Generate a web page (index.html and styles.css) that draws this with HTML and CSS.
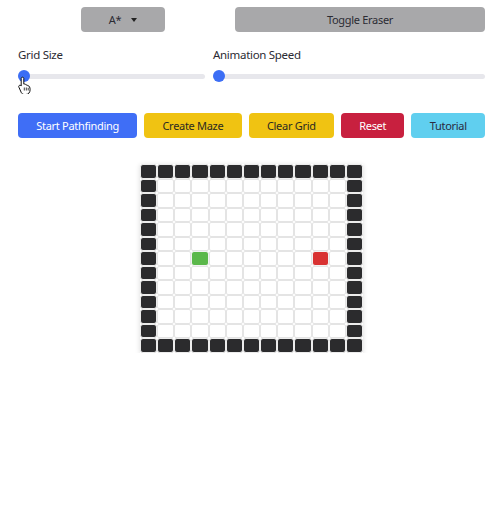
FILE: index.html
```html
<!DOCTYPE html>
<html>
<head>
<meta charset="utf-8">
<link rel="stylesheet" href="styles.css">
</head>
<body>
<div class="app">
  <div class="top">
    <div class="algo"><button class="btn btn-gray dropdown">A*<span class="caret"></span></button></div>
    <div class="eraser"><button class="btn btn-gray eraser-btn">Toggle Eraser</button></div>
  </div>
  <div class="controls">
    <div class="ctrl">
      <div class="label">Grid Size</div>
      <div class="slider"><span class="thumb"></span></div>
    </div>
    <div class="ctrl">
      <div class="label">Animation Speed</div>
      <div class="slider"><span class="thumb"></span></div>
    </div>
    <svg class="pointer" width="14" height="18" viewBox="0 0 14 18">
      <path d="M4.5 1.2c.8 0 1.3.6 1.3 1.3v5.6l.5-.1c.7-.2 1.4.1 1.6.7l.2.4c.6-.3 1.4-.1 1.7.6l.1.3c.6-.2 1.3 0 1.6.6.4.8.6 2 .6 3.2 0 2.6-1.7 4.7-4.3 4.7H6.4c-1.3 0-2.4-.7-3-1.7L.9 11.2c-.4-.7-.2-1.5.5-1.8.6-.3 1.3-.1 1.7.4l.1.2V2.5c0-.7.6-1.3 1.3-1.3z" fill="#fff" stroke="#111" stroke-width="1"/>
      <path d="M6.3 11.5v3M8.3 11.5v3M10.2 11.8v2.7" stroke="#111" stroke-width=".8" fill="none"/>
    </svg>
  </div>
  <div class="actions">
    <button class="btn btn-blue">Start Pathfinding</button>
    <button class="btn btn-yellow">Create Maze</button>
    <button class="btn btn-yellow">Clear Grid</button>
    <button class="btn btn-red">Reset</button>
    <button class="btn btn-cyan">Tutorial</button>
  </div>
  <div class="board">
    <span class="cell wall"></span><span class="cell wall"></span><span class="cell wall"></span><span class="cell wall"></span><span class="cell wall"></span><span class="cell wall"></span><span class="cell wall"></span><span class="cell wall"></span><span class="cell wall"></span><span class="cell wall"></span><span class="cell wall"></span><span class="cell wall"></span><span class="cell wall"></span>
    <span class="cell wall"></span><span class="cell"></span><span class="cell"></span><span class="cell"></span><span class="cell"></span><span class="cell"></span><span class="cell"></span><span class="cell"></span><span class="cell"></span><span class="cell"></span><span class="cell"></span><span class="cell"></span><span class="cell wall"></span>
    <span class="cell wall"></span><span class="cell"></span><span class="cell"></span><span class="cell"></span><span class="cell"></span><span class="cell"></span><span class="cell"></span><span class="cell"></span><span class="cell"></span><span class="cell"></span><span class="cell"></span><span class="cell"></span><span class="cell wall"></span>
    <span class="cell wall"></span><span class="cell"></span><span class="cell"></span><span class="cell"></span><span class="cell"></span><span class="cell"></span><span class="cell"></span><span class="cell"></span><span class="cell"></span><span class="cell"></span><span class="cell"></span><span class="cell"></span><span class="cell wall"></span>
    <span class="cell wall"></span><span class="cell"></span><span class="cell"></span><span class="cell"></span><span class="cell"></span><span class="cell"></span><span class="cell"></span><span class="cell"></span><span class="cell"></span><span class="cell"></span><span class="cell"></span><span class="cell"></span><span class="cell wall"></span>
    <span class="cell wall"></span><span class="cell"></span><span class="cell"></span><span class="cell"></span><span class="cell"></span><span class="cell"></span><span class="cell"></span><span class="cell"></span><span class="cell"></span><span class="cell"></span><span class="cell"></span><span class="cell"></span><span class="cell wall"></span>
    <span class="cell wall"></span><span class="cell"></span><span class="cell"></span><span class="cell start"></span><span class="cell"></span><span class="cell"></span><span class="cell"></span><span class="cell"></span><span class="cell"></span><span class="cell"></span><span class="cell end"></span><span class="cell"></span><span class="cell wall"></span>
    <span class="cell wall"></span><span class="cell"></span><span class="cell"></span><span class="cell"></span><span class="cell"></span><span class="cell"></span><span class="cell"></span><span class="cell"></span><span class="cell"></span><span class="cell"></span><span class="cell"></span><span class="cell"></span><span class="cell wall"></span>
    <span class="cell wall"></span><span class="cell"></span><span class="cell"></span><span class="cell"></span><span class="cell"></span><span class="cell"></span><span class="cell"></span><span class="cell"></span><span class="cell"></span><span class="cell"></span><span class="cell"></span><span class="cell"></span><span class="cell wall"></span>
    <span class="cell wall"></span><span class="cell"></span><span class="cell"></span><span class="cell"></span><span class="cell"></span><span class="cell"></span><span class="cell"></span><span class="cell"></span><span class="cell"></span><span class="cell"></span><span class="cell"></span><span class="cell"></span><span class="cell wall"></span>
    <span class="cell wall"></span><span class="cell"></span><span class="cell"></span><span class="cell"></span><span class="cell"></span><span class="cell"></span><span class="cell"></span><span class="cell"></span><span class="cell"></span><span class="cell"></span><span class="cell"></span><span class="cell"></span><span class="cell wall"></span>
    <span class="cell wall"></span><span class="cell"></span><span class="cell"></span><span class="cell"></span><span class="cell"></span><span class="cell"></span><span class="cell"></span><span class="cell"></span><span class="cell"></span><span class="cell"></span><span class="cell"></span><span class="cell"></span><span class="cell wall"></span>
    <span class="cell wall"></span><span class="cell wall"></span><span class="cell wall"></span><span class="cell wall"></span><span class="cell wall"></span><span class="cell wall"></span><span class="cell wall"></span><span class="cell wall"></span><span class="cell wall"></span><span class="cell wall"></span><span class="cell wall"></span><span class="cell wall"></span><span class="cell wall"></span>
  </div>
</div>
</body>
</html>
```
FILE: styles.css
```css
* { box-sizing: border-box; }
html, body { margin: 0; background: #fff; }
body {
  font-family: "Noto Sans", "Open Sans", sans-serif;
  font-size: 11px;
  letter-spacing: -0.3px;
  color: #2b2b33;
}
.app { padding: 7px 15px 0 18px; width: 500px; }
.btn {
  font-family: inherit;
  font-size: 11px;
  letter-spacing: -0.3px;
  height: 25px;
  border: none;
  border-radius: 4px;
  padding: 0 12px;
  color: #2b2b33;
  cursor: pointer;
  display: inline-flex;
  align-items: center;
  justify-content: center;
}
.top { display: grid; grid-template-columns: 187px 272px; column-gap: 8px; }
.algo { padding-left: 63px; }
.eraser { padding-left: 22px; }
.btn-gray { background: #a8a8aa; }
.dropdown { width: 84px; }
.caret {
  display: inline-block;
  margin-left: 10px;
  width: 0; height: 0;
  border-left: 3.5px solid transparent;
  border-right: 3.5px solid transparent;
  border-top: 4px solid #222;
}
.eraser-btn { width: 250px; }
.controls {
  position: relative;
  display: grid;
  grid-template-columns: 187px 272px;
  column-gap: 8px;
  margin-top: 14px;
}
.label { font-size: 11.5px; line-height: 18px; color: #2b2b33; }
.slider {
  position: relative;
  margin-top: 6px;
  height: 12px;
  display: flex;
  align-items: center;
}
.slider::before {
  content: "";
  display: block;
  width: 100%;
  height: 5px;
  border-radius: 3px;
  background: #e7e7ec;
}
.thumb {
  position: absolute;
  left: 0; top: 0;
  width: 12px; height: 12px;
  border-radius: 50%;
  background: #3c6ef5;
}
.pointer { position: absolute; left: 0; top: 30px; }
.actions {
  display: flex;
  gap: 7px;
  margin-top: 31px;
  width: 467px;
}
.actions .btn { flex: 1 1 auto; }
.btn-blue { background: #3f6ef6; color: #fff; }
.btn-yellow { background: #f0c312; color: #2b2a22; }
.btn-red { background: #c8203f; color: #fff; }
.btn-cyan { background: #60cfef; color: #2b2b40; }
.board {
  margin-top: 26px;
  margin-left: 122px;
  width: 223px;
  height: 189px;
  display: grid;
  grid-template-columns: repeat(13, 1fr);
  grid-template-rows: repeat(13, 1fr);
  box-shadow: 0 1px 5px rgba(0,0,0,0.14);
}
.cell {
  border: 1px solid #e4e4e4;
  border-radius: 2px;
  background: #fff;
}
.cell.wall { background: #2b2b2d; border-color: #ececec; border-radius: 3px; }
.cell.start { background: #5bb84b; border-color: #f2f2f2; border-radius: 3px; }
.cell.end { background: #d93232; border-color: #f2f2f2; border-radius: 3px; }
```
